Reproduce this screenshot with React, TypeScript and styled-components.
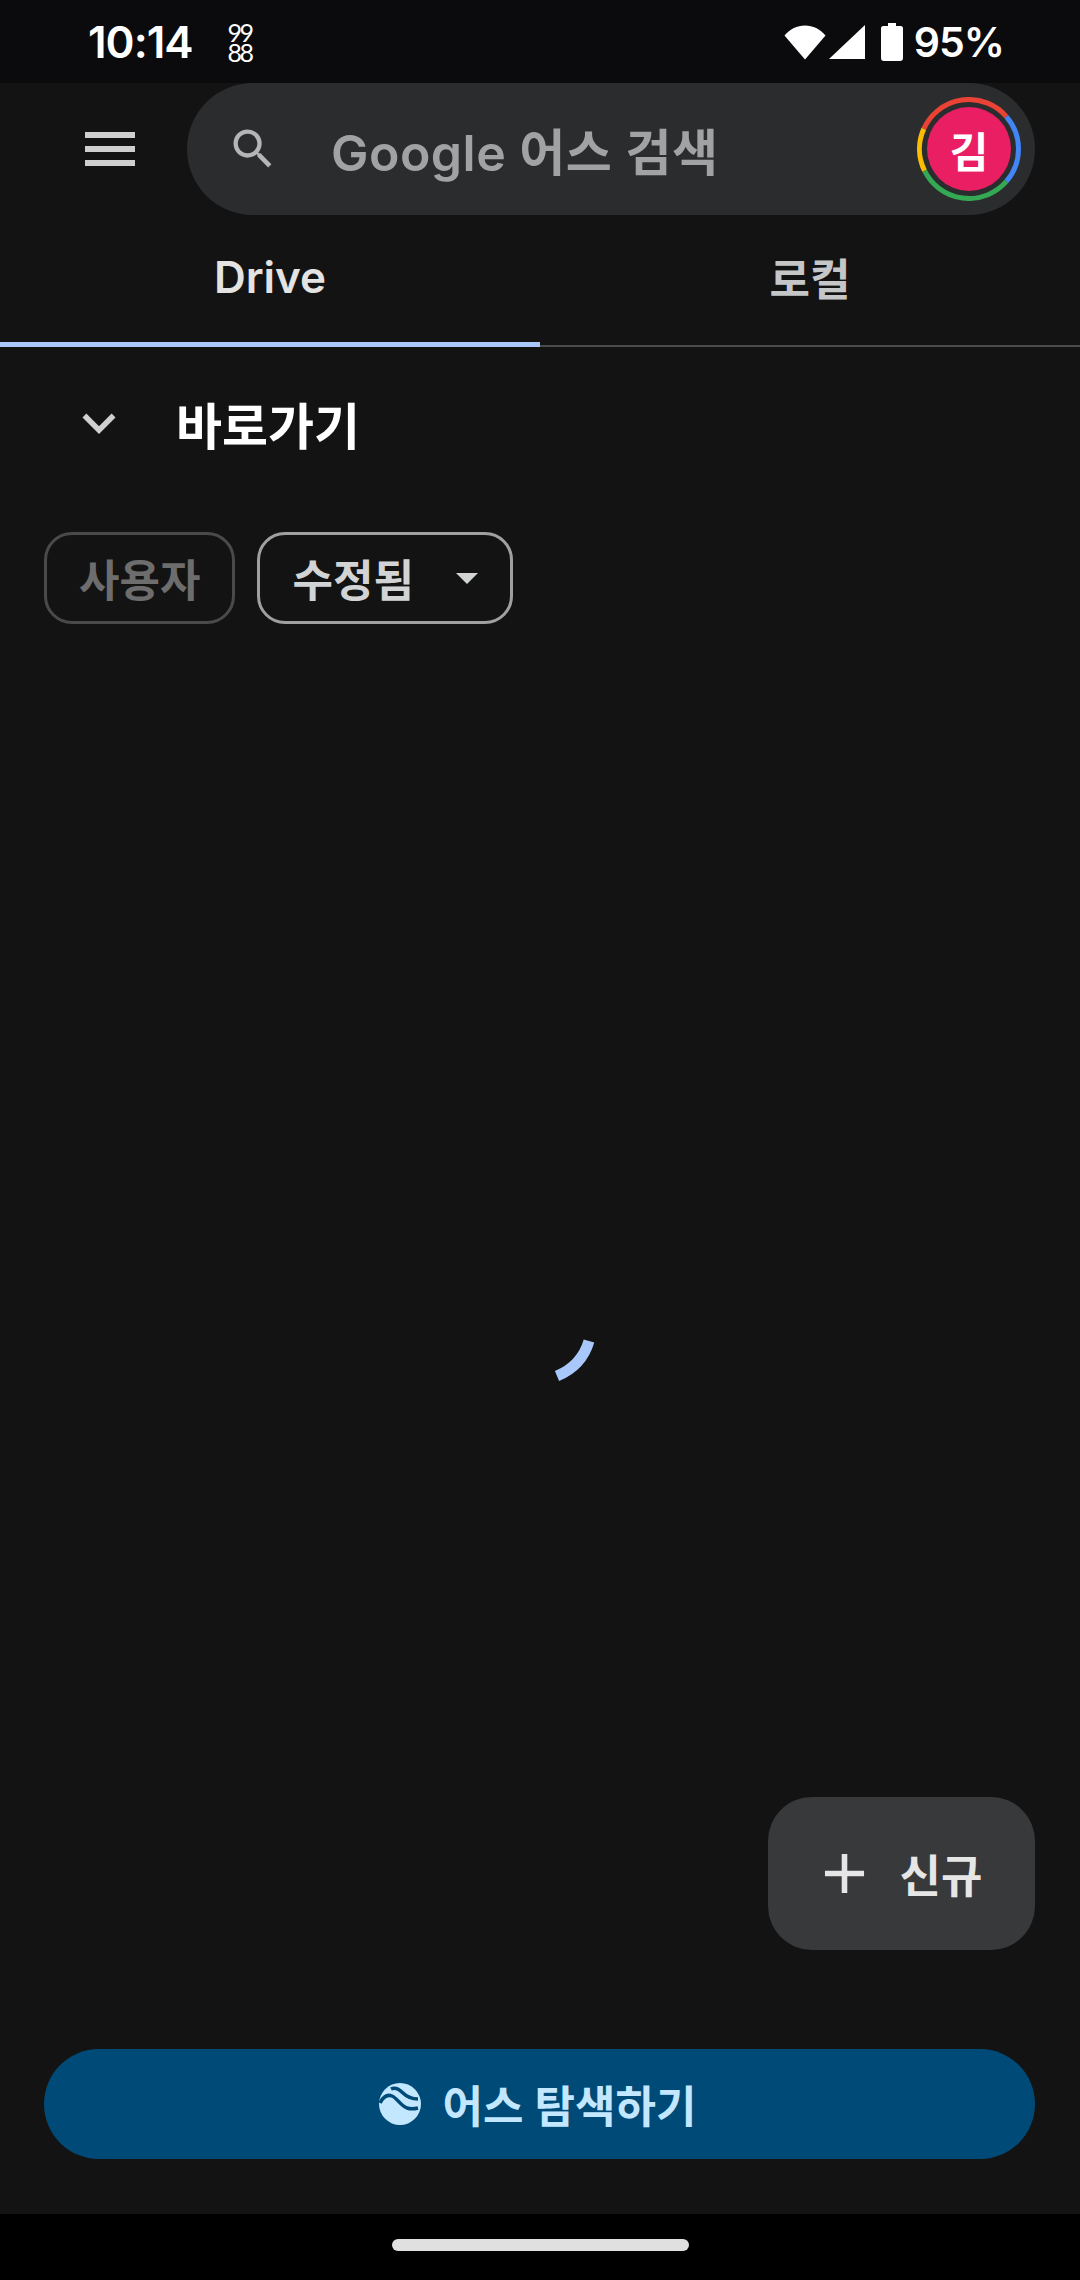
import styled, { createGlobalStyle } from "styled-components";
import { MdSearch, MdExpandMore, MdAdd } from "react-icons/md";

const GlobalStyle = createGlobalStyle`
  html, body {
    margin: 0;
    padding: 0;
    background: #131313;
  }
`;

const polar = (deg: number, r: number) => {
  const rad = ((deg - 90) * Math.PI) / 180;
  return `${52 + r * Math.cos(rad)} ${52 + r * Math.sin(rad)}`;
};

const arc = (from: number, to: number, r = 49.5) =>
  `M${polar(from, r)} A${r} ${r} 0 ${to - from > 180 ? 1 : 0} 1 ${polar(to, r)}`;

const RING = [
  { color: "#ea4335", from: -66, to: 49 },
  { color: "#4285f4", from: 49, to: 131 },
  { color: "#34a853", from: 131, to: 244 },
  { color: "#fbbc04", from: 244, to: 294 },
];

const App = () => {
  return (
    <>
      <GlobalStyle />
      <Page>
        <StatusBar>
          <StatusLeft>
            <Clock>10:14</Clock>
            <NotifyGlyph>
              99
              <br />
              88
            </NotifyGlyph>
          </StatusLeft>
          <StatusRight>
            <svg width="42" height="36" viewBox="0 0 42 36">
              <path d="M0.5 11.5C6 5 13 1.500 21 1.500S36 5 41.500 11.500L21 35.500Z" fill="#fff" />
            </svg>
            <SignalIcon width="36" height="36" viewBox="0 0 36 36">
              <path d="M36 1V35H0Z" fill="#fff" />
            </SignalIcon>
            <BatteryIcon width="22" height="38" viewBox="0 0 22 38">
              <path d="M7 0H15V3H20C21 3 22 4 22 5V35C22 37 21 38 19 38H3C1 38 0 37 0 35V5C0 4 1 3 2 3H7Z" fill="#fff" />
            </BatteryIcon>
            <Percent>95%</Percent>
          </StatusRight>
        </StatusBar>

        <TopBar>
          <MenuButton>
            <svg width="50" height="34" viewBox="0 0 50 34">
              <path d="M0 0H50V6H0ZM0 14H50V20H0ZM0 28H50V34H0Z" fill="#cfcfcf" />
            </svg>
          </MenuButton>
          <SearchPill>
            <MdSearch size={52} color="#b4b5b6" />
            <SearchLabel>Google 어스 검색</SearchLabel>
            <Avatar>
              <RingSvg width="104" height="104" viewBox="0 0 104 104">
                {RING.map((seg) => (
                  <path
                    key={seg.color}
                    d={arc(seg.from, seg.to)}
                    fill="none"
                    stroke={seg.color}
                    strokeWidth="5"
                  />
                ))}
              </RingSvg>
              <AvatarFace>김</AvatarFace>
            </Avatar>
          </SearchPill>
        </TopBar>

        <Tabs>
          <Tab $active>Drive</Tab>
          <Tab>로컬</Tab>
        </Tabs>

        <Section>
          <SectionHead>
            <MdExpandMore size={66} color="#d0d0d0" />
            <SectionTitle>바로가기</SectionTitle>
          </SectionHead>
          <Chips>
            <Chip $disabled>사용자</Chip>
            <Chip>
              수정됨
              <Caret />
            </Chip>
          </Chips>
        </Section>

        <Content>
          <Spinner width="48" height="48" viewBox="0 0 48 48">
            <path d="M39 4C34 21 24 32 7 39" fill="none" stroke="#a8c7fa" strokeWidth="11" />
          </Spinner>
          <Fab>
            <MdAdd size={67} color="#e6e6e6" />
            신규
          </Fab>
        </Content>

        <Footer>
          <ExploreButton>
            <svg width="42" height="42" viewBox="0 0 42 42">
              <circle cx="21" cy="21" r="21" fill="#c2e7ff" />
              <path
                d="M1 20C4 14 8 11 13 13C18 15 21 22 28 25C31 26 35 26 39 25"
                fill="none"
                stroke="#004a77"
                strokeWidth="3.5"
              />
              <path
                d="M12 6C16 4 20 6 24 10C27 13 32 16 39 16"
                fill="none"
                stroke="#004a77"
                strokeWidth="3.5"
              />
            </svg>
            어스 탐색하기
          </ExploreButton>
        </Footer>

        <NavBar>
          <NavHandle />
        </NavBar>
      </Page>
    </>
  );
};

export default App;

const FONT = `Roboto, "Noto Sans CJK KR", sans-serif`;

const Page = styled.div`
  width: 1080px;
  height: 2280px;
  display: flex;
  flex-direction: column;
  overflow: hidden;
  background: #131313;
  font-family: ${FONT};
`;

const StatusBar = styled.div`
  height: 83px;
  flex: none;
  display: flex;
  align-items: center;
  justify-content: space-between;
  padding: 0 76px 0 88px;
  background: #0b0b0d;
  color: #fff;
`;

const StatusLeft = styled.div`
  display: flex;
  align-items: center;
  gap: 35px;
`;

const Clock = styled.span`
  font-family: Inter, sans-serif;
  font-size: 44px;
  font-weight: 600;
  letter-spacing: -1px;
`;

const NotifyGlyph = styled.span`
  display: block;
  font-family: Lato, sans-serif;
  font-size: 25px;
  line-height: 20px;
  letter-spacing: -2.5px;
  font-weight: 400;
`;

const StatusRight = styled.div`
  display: flex;
  align-items: center;
`;

const SignalIcon = styled.svg`
  margin-left: 3px;
`;

const BatteryIcon = styled.svg`
  margin-left: 16px;
`;

const Percent = styled.span`
  margin-left: 11px;
  font-family: Inter, sans-serif;
  font-size: 41px;
  font-weight: 600;
  letter-spacing: -1px;
`;

const TopBar = styled.div`
  height: 132px;
  flex: none;
  display: flex;
  align-items: center;
  padding: 0 45px 0 85px;
`;

const MenuButton = styled.div`
  width: 102px;
  height: 60px;
  display: flex;
  align-items: center;
  flex: none;
`;

const SearchPill = styled.div`
  flex: 1;
  height: 132px;
  display: flex;
  align-items: center;
  padding: 0 14px 0 40px;
  border-radius: 66px;
  background: #2a2c2e;
`;

const SearchLabel = styled.span`
  flex: 1;
  margin-left: 52px;
  color: #a0a2a4;
  font-family: Inter, "Noto Sans CJK KR", sans-serif;
  font-size: 50px;
  font-weight: 600;
  letter-spacing: 0.5px;
`;

const Avatar = styled.div`
  position: relative;
  width: 104px;
  height: 104px;
  flex: none;
  display: flex;
  align-items: center;
  justify-content: center;
`;

const RingSvg = styled.svg`
  position: absolute;
  inset: 0;
`;

const AvatarFace = styled.div`
  width: 84px;
  height: 84px;
  display: flex;
  align-items: center;
  justify-content: center;
  border-radius: 50%;
  background: #e91e63;
  color: #fff;
  font-size: 42px;
  font-weight: 700;
`;

const Tabs = styled.div`
  height: 130px;
  flex: none;
  display: grid;
  grid-template-columns: 1fr 1fr;
  border-bottom: 2px solid #4a4b4d;
`;

const Tab = styled.div<{ $active?: boolean }>`
  display: flex;
  align-items: center;
  justify-content: center;
  padding-bottom: ${(p) => (p.$active ? "4px" : "6px")};
  margin-bottom: ${(p) => (p.$active ? "-2px" : "0")};
  border-bottom: ${(p) => (p.$active ? "5px solid #a8c7fa" : "0")};
  color: ${(p) => (p.$active ? "#e3e3e3" : "#c4c6c7")};
  font-family: Inter, "Noto Sans CJK KR", sans-serif;
  font-size: 44px;
  font-weight: 600;
`;

const Section = styled.div`
  flex: none;
  display: flex;
  flex-direction: column;
  padding: 0 44px;
`;

const SectionHead = styled.div`
  height: 124px;
  margin-top: 14px;
  display: flex;
  align-items: center;
  gap: 44px;
  padding-left: 22px;
`;

const SectionTitle = styled.span`
  color: #fff;
  font-size: 50px;
  font-weight: 700;
`;

const Chips = styled.div`
  margin-top: 47px;
  display: flex;
  gap: 22px;
`;

const Chip = styled.div<{ $disabled?: boolean }>`
  height: 92px;
  box-sizing: border-box;
  display: flex;
  align-items: center;
  gap: 42px;
  padding: 0 32px;
  border: 3px solid ${(p) => (p.$disabled ? "#4a4a4a" : "#a0a0a0")};
  border-radius: 28px;
  color: ${(p) => (p.$disabled ? "#6d6d6d" : "#d2d3d4")};
  font-size: 44px;
  font-weight: 700;
`;

const Caret = styled.span`
  width: 0;
  height: 0;
  border-left: 11px solid transparent;
  border-right: 11px solid transparent;
  border-top: 11px solid #d2d3d4;
`;

const Content = styled.div`
  position: relative;
  flex: 1;
  display: flex;
  align-items: center;
  justify-content: center;
`;

const Spinner = styled.svg`
  margin-left: 68px;
  margin-top: 49px;
`;

const Fab = styled.div`
  position: absolute;
  right: 45px;
  bottom: 99px;
  width: 267px;
  height: 153px;
  box-sizing: border-box;
  padding-right: 10px;
  display: flex;
  align-items: center;
  justify-content: center;
  gap: 22px;
  border-radius: 44px;
  background: #38393b;
  color: #e6e6e6;
  font-size: 45px;
  font-weight: 700;
`;

const Footer = styled.div`
  flex: none;
  padding: 0 45px 55px 44px;
`;

const ExploreButton = styled.div`
  height: 110px;
  box-sizing: border-box;
  padding-right: 4px;
  display: flex;
  align-items: center;
  justify-content: center;
  gap: 22px;
  border-radius: 55px;
  background: #004a77;
  color: #c2e7ff;
  font-size: 44px;
  font-weight: 700;
`;

const NavBar = styled.div`
  height: 66px;
  flex: none;
  display: flex;
  justify-content: center;
  align-items: flex-start;
  padding-top: 25px;
  box-sizing: border-box;
  background: #000;
`;

const NavHandle = styled.div`
  width: 297px;
  height: 12px;
  border-radius: 6px;
  background: #e0e0e0;
`;
